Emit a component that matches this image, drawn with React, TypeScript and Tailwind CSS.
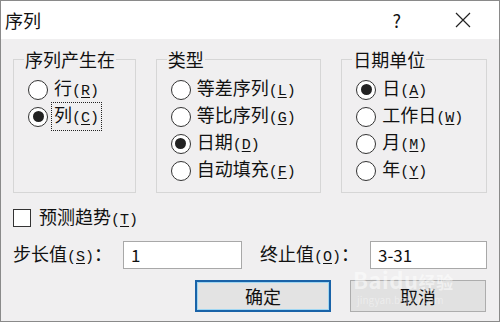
import React from 'react';

const font = { fontFamily: '"Noto Sans CJK SC", "Noto Sans", sans-serif' };

// key letter in parentheses, underlined like a Windows access key
const Key: React.FC<{ k: string }> = ({ k }) => (
  <span className="text-[15px]" style={{ fontFamily: '"Liberation Mono", monospace' }}>
    (<span className="underline underline-offset-2">{k}</span>)
  </span>
);

const Radio: React.FC<{ label: string; k: string; checked?: boolean; focused?: boolean }> = ({
  label,
  k,
  checked = false,
  focused = false,
}) => (
  <div className="flex items-center h-[27px]">
    <span className="w-[20px] h-[20px] rounded-full border border-[#333] bg-white flex items-center justify-center shrink-0">
      {checked && <span className="w-[11px] h-[11px] rounded-full bg-[#222]" />}
    </span>
    <span
      className={`ml-[4px] px-[2px] leading-[22px] text-[18px] ${
        focused ? 'outline outline-1 outline-dotted outline-[#222]' : ''
      }`}
    >
      {label}
      <Key k={k} />
    </span>
  </div>
);

const Group: React.FC<{ title: string; width: string; children: React.ReactNode }> = ({
  title,
  width,
  children,
}) => (
  <fieldset className={`${width} h-[145px] border border-[#d6d6d6] pl-[14px] pt-[6px]`}>
    <legend className="ml-[-4px] px-[1px] text-[18px] leading-[22px]">{title}</legend>
    {children}
  </fieldset>
);

export default function App() {
  return (
    <div
      className="w-[500px] h-[322px] bg-[#f0eff0] border border-[#8a8a8a] flex flex-col text-[#111] overflow-hidden relative"
      style={font}
    >
      {/* title bar */}
      <div className="h-[38px] bg-white flex items-center pl-[4px] shrink-0">
        <span className="text-[18px]">序列</span>
        <span className="ml-auto text-[18px] mr-[54px]">?</span>
        <svg width="16" height="16" viewBox="0 0 16 16" className="mr-[28px]">
          <path d="M1 1 L15 15 M15 1 L1 15" stroke="#222" strokeWidth="1.2" />
        </svg>
      </div>

      <div className="flex flex-col px-[12px] pt-[9px]">
        <div className="flex gap-[20px]">
          <Group title="序列产生在" width="w-[123px]">
            <Radio label="行" k="R" />
            <Radio label="列" k="C" checked focused />
          </Group>
          <Group title="类型" width="w-[166px]">
            <Radio label="等差序列" k="L" />
            <Radio label="等比序列" k="G" />
            <Radio label="日期" k="D" checked />
            <Radio label="自动填充" k="F" />
          </Group>
          <Group title="日期单位" width="w-[146px]">
            <Radio label="日" k="A" checked />
            <Radio label="工作日" k="W" />
            <Radio label="月" k="M" />
            <Radio label="年" k="Y" />
          </Group>
        </div>

        <div className="flex items-center mt-[14px] h-[22px]">
          <span className="w-[18px] h-[18px] border border-[#333] bg-white" />
          <span className="ml-[8px] text-[18px]">
            预测趋势
            <Key k="T" />
          </span>
        </div>

        <div className="flex items-center mt-[12px] h-[28px]">
          <span className="w-[110px] text-[18px]">
            步长值
            <Key k="S" />：
          </span>
          <div className="w-[119px] h-[28px] bg-white border border-[#a8a8a8] flex items-center pl-[7px] text-[17px]">
            1
          </div>
          <span className="ml-[18px] w-[110px] text-[18px]">
            终止值
            <Key k="O" />：
          </span>
          <div className="w-[117px] h-[28px] bg-white border border-[#a8a8a8] flex items-center pl-[7px] text-[17px]">
            3-31
          </div>
        </div>

        <div className="flex mt-[11px] pl-[182px] gap-[19px]">
          <button className="w-[136px] h-[32px] bg-[#e3e3e3] border-2 border-[#1a63a8] shadow-[inset_0_0_0_1px_#9fd6f2] text-[18px]">
            确定
          </button>
          <button className="w-[136px] h-[32px] bg-[#e1e1e1] border border-[#adadad] text-[18px]">
            取消
          </button>
        </div>
      </div>

      {/* watermark */}
      <div className="absolute left-[352px] top-[266px] text-[22px] leading-[24px] font-bold text-white/50 tracking-wide pointer-events-none">
        Baidu<span className="text-[17px]">经验</span>
      </div>
      <div className="absolute left-[356px] top-[293px] text-[10px] leading-[12px] text-white/40 pointer-events-none">
        jingyan.baidu.com
      </div>
    </div>
  );
}
